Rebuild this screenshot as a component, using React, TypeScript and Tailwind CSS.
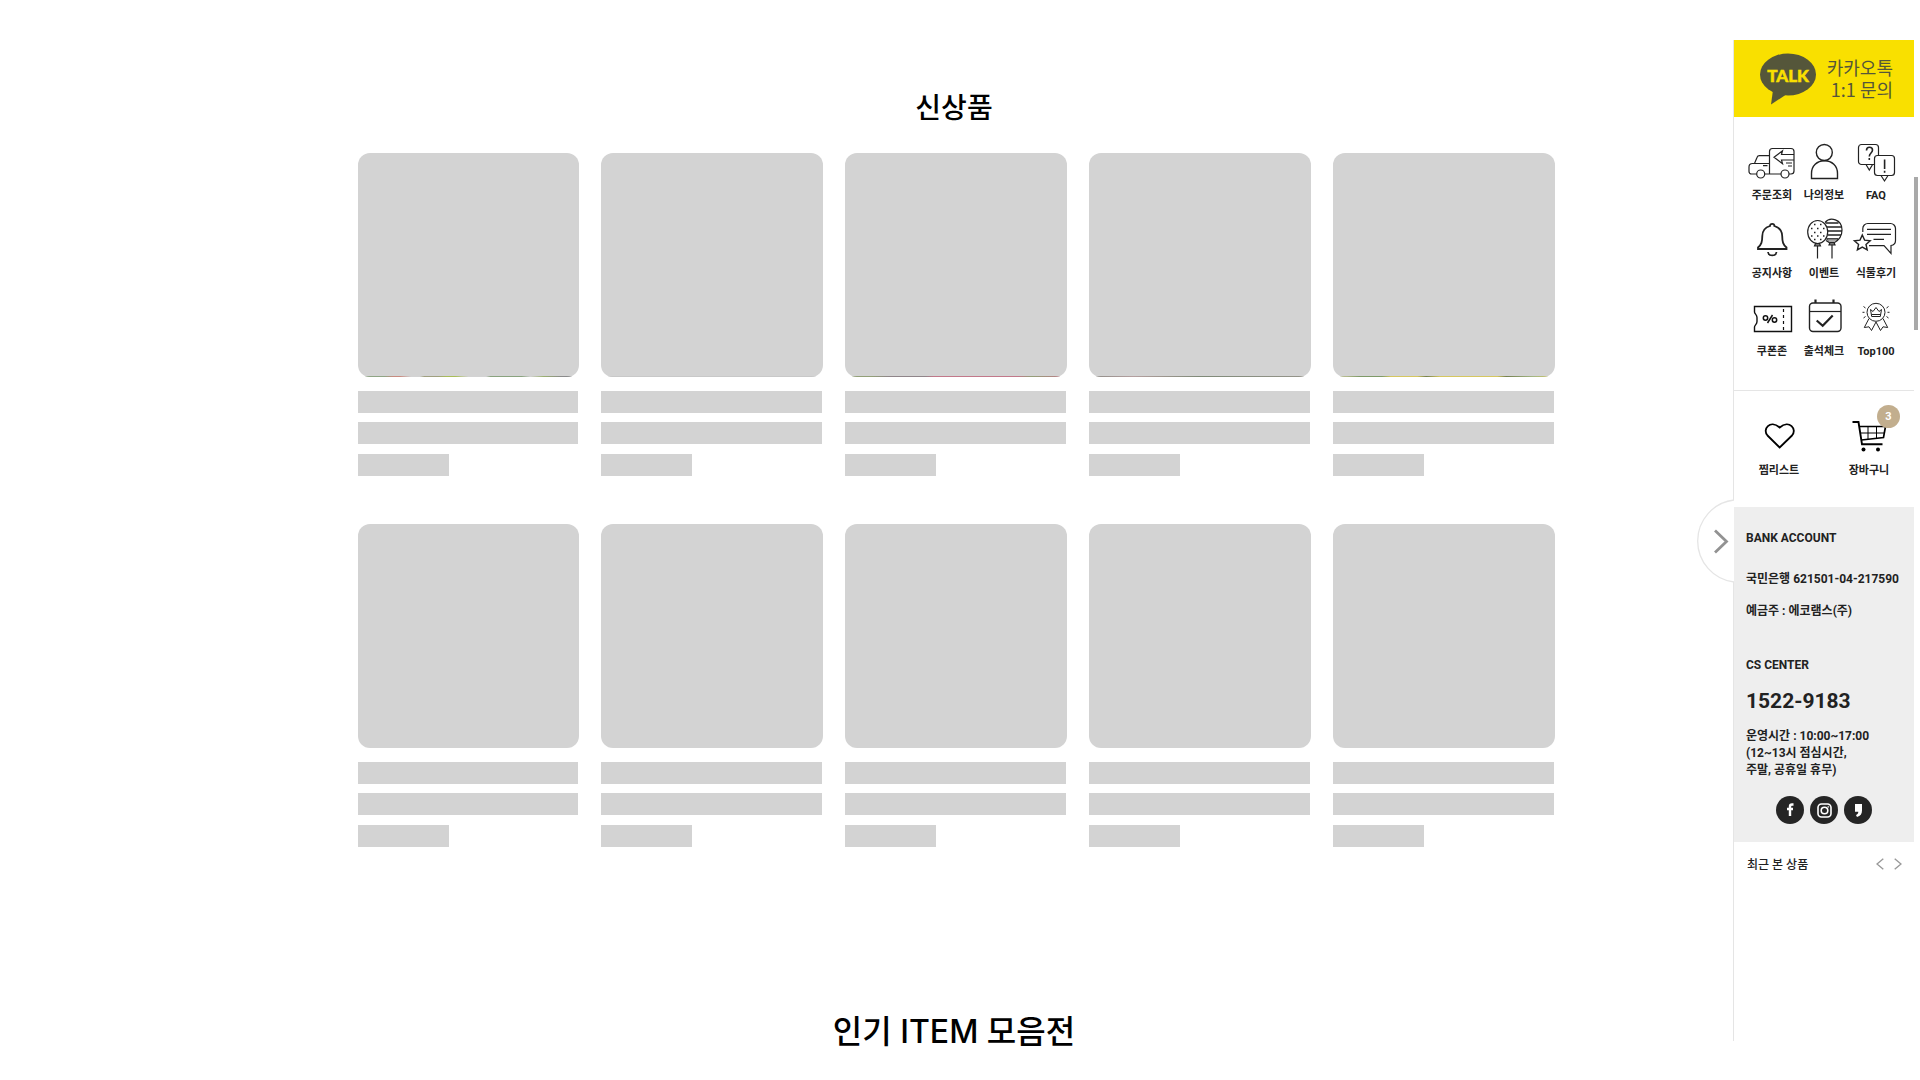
import type { ReactNode } from "react";

const STRIPS = [
  "bg-[linear-gradient(90deg,#8fa585_0_12%,#c98b80_16%_19%,#d3d3d3_24%_28%,#a0a080_30%_36%,#a9bd58_40%_44%,#d3d3d3_50%_58%,#8aa37f_60%_74%,#d3d3d3_78%,#9bb070_84%,#8b8b8b_92%)]",
  "bg-[#c8c8c8]",
  "bg-[linear-gradient(90deg,#93a078_0_12%,#8f8589_20%_36%,#c2788a_40%_78%,#93a078_84%,#c2788a)]",
  "bg-[linear-gradient(90deg,#8c8c86,#b5a0a0_20%,#7f8a78_50%,#97958c)]",
  "bg-[linear-gradient(90deg,#b3b98a_0_6%,#7f9a68_12%_22%,#d6c760_26%_38%,#75804f_42%,#d6c760_48%_74%,#75804f_78%,#a4b684_90%,#d6c760)]",
];

function ProductCard({ strip }: { strip?: string }) {
  return (
    <li>
      <div className="flex h-[224px] flex-col justify-end overflow-hidden rounded-xl bg-[#d3d3d3]">
        {strip && <div className={`h-px ${strip}`} />}
      </div>
      <div className="mt-[14px] mr-px h-[22px] bg-[#d3d3d3]" />
      <div className="mt-[9px] mr-px h-[22px] bg-[#d3d3d3]" />
      <div className="mt-[10px] h-[22px] w-[91px] bg-[#d3d3d3]" />
    </li>
  );
}

function Icon({ children }: { children: ReactNode }) {
  return (
    <svg width="52" height="46" viewBox="0 0 52 46" fill="none" stroke="#222" strokeWidth="1.2" aria-hidden="true">
      {children}
    </svg>
  );
}

const MENU: { label: string; icon: ReactNode }[] = [
  {
    label: "주문조회",
    icon: (
      <>
        <path d="M10.7 36H5.5a2.500 2.500 0 0 1-2.500-2.500V29a3.500 3.500 0 0 1 3.500-3.500h2L11 19.500q.6-1.800 2.500-1.800H23.500M8.500 25.500H23.500M18.700 36H35M23.500 36V13.500a3 3 0 0 1 3-3H45a3 3 0 0 1 3 3V33a3 3 0 0 1-3 3H43" />
        <circle cx="14.700" cy="36" r="4" />
        <circle cx="39" cy="36" r="4" />
        <path d="M48 16.500H35.500l1-3.700L28 19.300l8.500 6.400-1-3.700H48M40 25h6M42 28h4M17 27.700h4.500" />
      </>
    ),
  },
  {
    label: "나의정보",
    icon: (
      <g strokeWidth="1.4">
        <circle cx="26.300" cy="14.500" r="8" />
        <path d="M13.500 40.500V35.500C13.500 28 19 22.800 26.500 22.800S39.500 28 39.500 35.500V40.500Z" />
      </g>
    ),
  },
  {
    label: "FAQ",
    icon: (
      <>
        <path d="M24.500 26.500H11.500a3 3 0 0 1-3-3V9.500a3 3 0 0 1 3-3H25.500a3 3 0 0 1 3 3V17.500M16 26.500l3.300 5.500 3.300-5.500" />
        <rect x="24.500" y="17.500" width="20" height="20" rx="3" />
        <path d="M31 37.500l3.500 5.500 3.500-5.500" />
        <path d="M16.500 12.500c0-4.500 6-4 6-.5 0 3-3.200 3-3.200 6.500M19.300 20v2M34.600 21.500V31M34.600 32.700v2" strokeWidth="1.600" />
      </>
    ),
  },
  {
    label: "공지사항",
    icon: (
      <g strokeWidth="1.800">
        <path d="M24 10a2.200 2.200 0 0 1 4.400 0c4.600 1.300 7.600 5 7.800 10 .1 6 .8 8.500 4.300 11.500V33H12v-1.500c3.500-3 4.200-5.500 4.300-11.500C16.400 15 19.400 11.300 24 10Z" />
        <path d="M22 36c.5 4.500 8 4.500 8.500 0" />
      </g>
    ),
  },
  {
    label: "이벤트",
    icon: (
      <>
        <path d="M27 6.500C32 .5 44 3 44 14c0 6-4 10.500-7.500 12.500h-5.500L28 24.500" />
        <path d="M27.500 7H40.500M29 11H44M30 15H44M29.500 19H43M28.500 23H40" strokeWidth="1.300" />
        <path d="M29 23H40L36.500 26.500H31Z" fill="#aaa" strokeWidth=".6" />
        <ellipse cx="19.700" cy="16" rx="10" ry="11.500" />
        <path d="M17.500 27.500h4l1 2.500h-6ZM32 26.500h4l1 2.500h-6Z" fill="#777" />
        <path d="M19.500 30V42.500M34 29V42.500" />
        <path
          d="M16 8.500h1.500M22 8.500h1.500M13 12.500h1.500M19 12.500h1.500M25 12.500h1.500M16 16.500h1.500M22 16.500h1.500M13 20h1.500M19 20h1.500M25 20h1.500M16 23.500h1.500M22 23.500h1.500"
          strokeWidth="1.500"
        />
      </>
    ),
  },
  {
    label: "식물후기",
    icon: (
      <>
        <path d="M12.800 16V12.500a5 5 0 0 1 5-5H40.500a5 5 0 0 1 5 5V24.500c0 3-1.500 4.500-4.500 5V37.500L34 29.700H19" />
        <path d="M17 13.300H41M17 18.300H41M23.500 23.300H34" />
        <path d="M12.300 19l2.300 5.100 5.600.6-4.200 3.700 1.200 5.500-4.900-2.800-4.900 2.800 1.200-5.500-4.200-3.700 5.600-.6Z" strokeWidth="1.400" />
      </>
    ),
  },
  {
    label: "쿠폰존",
    icon: (
      <g stroke="#111">
        <path d="M8.500 12.500H45.500V37.500H8.500V33c0-2 2.500-2.500 2.500-5.500v-4c0-3-2.500-3.500-2.500-5.500Z" strokeWidth="1.400" />
        <path d="M37.500 15V37" strokeDasharray="3 3" />
        <circle cx="19.500" cy="24" r="2.200" strokeWidth="1.500" />
        <circle cx="28.500" cy="26" r="2.200" strokeWidth="1.500" />
        <path d="M26.500 21L21.500 29" strokeWidth="1.500" />
      </g>
    ),
  },
  {
    label: "출석체크",
    icon: (
      <>
        <rect x="11.500" y="9" width="31.500" height="28.500" rx="3.500" strokeWidth="1.400" />
        <path d="M11.500 17.500H43" />
        <path d="M17.500 5.500V9M35.500 5.500V9" strokeWidth="2.200" />
        <path d="M18.700 26.500l6 5.300L34.700 21.500" strokeWidth="2.200" />
      </>
    ),
  },
  {
    label: "Top100",
    icon: (
      <g strokeWidth="1">
        <circle cx="26" cy="18.300" r="9" />
        <path d="M20.500 15.500l2.500 2 3-4 3 4 2.500-2-1.200 7H21.700ZM21.500 20.500h9" />
        <path d="M19 24.500L14.300 33.500l4.700-.7 2.500 3.700L26 28l4.500 8.500 2.500-3.700 4.700.7L33 24.500" />
        <path d="M15.500 14l-2-1.500M14.500 18.300H12.500M15.500 22.500l-2 1.500M36.500 14l2-1.500M37.500 18.300h2M36.500 22.500l2 1.500" />
      </g>
    ),
  },
];

const linkClass = "flex flex-col items-center text-[11px] leading-4 font-bold";
const titleClass = "w-full pr-[4px] text-center font-medium text-black";

export default function App() {
  return (
    <div className="flex h-screen items-start overflow-hidden bg-white font-['Inter','Noto_Sans_CJK_KR',sans-serif] text-[#222]">
      <main className="flex min-w-0 flex-1 flex-col items-center pl-[179px]">
        <h2 className={`mt-[88px] text-[28px] leading-10 ${titleClass}`}>신상품</h2>
        <ul className="mt-[25px] grid w-full max-w-[1197px] grid-cols-5 gap-x-[22px] gap-y-12">
          {STRIPS.map((strip) => (
            <ProductCard key={strip} strip={strip} />
          ))}
          {STRIPS.map((_, i) => (
            <ProductCard key={i} />
          ))}
        </ul>
        <h2 className={`mt-[161px] text-[32px] leading-[48px] ${titleClass}`}>인기 ITEM 모음전</h2>
      </main>

      <div className="h-full shrink-0 pt-10 pb-[39px] font-['Roboto','Noto_Sans_CJK_KR',sans-serif]">
        <aside className="relative h-full w-[181px] border-l border-[#e5e5e5]">
          <button type="button" aria-label="사이드 메뉴 닫기" className="absolute top-[459px] -left-[37px] h-[84px] w-[37px]">
            <svg width="37" height="84" viewBox="0 0 37 84" fill="none">
              <path d="M37 1A41.300 41.300 0 0 0 37 83" stroke="#e5e5e5" strokeWidth="1.3" fill="#fff" />
              <path d="M18 31.500L29.500 42.500L18 53.500" stroke="#929292" strokeWidth="2.800" />
            </svg>
          </button>

          <a
            href="#talk"
            className="flex h-[77px] items-center justify-between bg-[#f9e000] pr-[21px] pl-[26px] font-['Noto_Sans_CJK_KR',sans-serif] text-[#55563a]"
          >
            <svg width="56" height="52" viewBox="0 0 56 52">
              <ellipse cx="28" cy="21.500" rx="28" ry="21" fill="currentColor" />
              <path d="M13 37L11 51.500L27 41Z" fill="currentColor" />
              <text x="28" y="29" textAnchor="middle" fontSize="17" fontWeight="900" fill="#f9e000" stroke="#f9e000" strokeWidth=".5" fontFamily="Lato, sans-serif">
                TALK
              </text>
            </svg>
            <span className="pb-[2px] text-right text-[18px] leading-[22px]">
              카카오톡
              <br />
              1:1 문의
            </span>
          </a>

          <nav className="grid grid-cols-3 gap-y-3 border-b border-[#e5e5e5] px-3 pt-[21px] pb-[30px]">
            {MENU.map(({ label, icon }) => (
              <a key={label} href="#menu" className={linkClass}>
                <Icon>{icon}</Icon>
                <span className="mt-1 whitespace-nowrap">{label}</span>
              </a>
            ))}
          </nav>

          <div className="grid h-[116px] grid-cols-2 pt-5">
            <a href="#wish" className={linkClass}>
              <Icon>
                <path
                  d="M26.700 36.500L14.500 24.500C9 18.500 17 8 26.700 16.500C36.500 8 44.500 18.500 39 24.500Z"
                  stroke="#000"
                  strokeWidth="1.800"
                />
              </Icon>
              <span className="mt-[6px]">찜리스트</span>
            </a>
            <a href="#cart" className={linkClass}>
              <span className="relative">
                <Icon>
                  <g stroke="#000">
                    <path d="M9.500 11H15.500L19 33.300H39.500" strokeWidth="1.900" />
                    <path d="M16.500 15.500H42.500L40.500 26.500L18.500 29" strokeWidth="1.700" />
                    <path d="M17.500 22H41.500M25 15.500V28M33.500 15.500V27" strokeWidth="1" />
                    <circle cx="20.500" cy="38.500" r="2" fill="#000" stroke="none" />
                    <circle cx="35" cy="38.500" r="2" fill="#000" stroke="none" />
                  </g>
                </Icon>
                <span className="absolute -top-[6px] left-[34px] flex size-[23px] items-center justify-center rounded-full bg-[#c2ae8e] text-[11px] text-white">
                  3
                </span>
              </span>
              <span className="mt-[6px]">장바구니</span>
            </a>
          </div>

          <section className="bg-[#eee] pt-[23px] pb-[18px] pl-3 text-[12px] leading-4 font-bold whitespace-nowrap">
            <h3>BANK ACCOUNT</h3>
            <p className="mt-[25px]">국민은행 621501-04-217590</p>
            <p className="mt-4">예금주 : 에코램스(주)</p>
            <h3 className="mt-[38px]">CS CENTER</h3>
            <p className="mt-4 text-[21px] leading-6">1522-9183</p>
            <p className="mt-[15px] leading-[17px]">
              운영시간 : 10:00~17:00
              <br />
              (12~13시 점심시간,
              <br />
              주말, 공휴일 휴무)
            </p>
            <div className="mt-[17px] flex gap-[6px] pl-[30px]">
              <a href="#facebook" aria-label="Facebook" className="size-7 rounded-full bg-[#252525]">
                <svg width="28" height="28" viewBox="0 0 28 28" fill="none">
                  <path d="M17.500 8.500h-1.500q-2 0-2 2V20M11 13h6" stroke="#fff" strokeWidth="2.400" />
                </svg>
              </a>
              <a href="#instagram" aria-label="Instagram" className="size-7 rounded-full bg-[#252525]">
                <svg width="28" height="28" viewBox="0 0 28 28" fill="none" stroke="#fff" strokeWidth="1.600">
                  <rect x="8" y="8" width="13" height="13" rx="3.500" />
                  <circle cx="14.500" cy="14.500" r="3.300" />
                  <circle cx="18.300" cy="10.800" r=".5" strokeWidth=".8" />
                </svg>
              </a>
              <a href="#story" aria-label="KakaoStory" className="size-7 rounded-full bg-[#252525]">
                <svg width="28" height="28" viewBox="0 0 28 28">
                  <path d="M11 8h7v6.500c0 3.500-1.500 5.500-5 6.500l-1-2c1.500-.6 2.300-1.500 2.300-3.300H11Z" fill="#fff" />
                </svg>
              </a>
            </div>
          </section>

          <div className="flex items-center justify-between pt-[15px] pr-3 pl-[13px]">
            <h3 className="text-[12px] leading-4 font-medium">최근 본 상품</h3>
            <div className="flex gap-[10px] pb-[2px]">
              <button type="button" aria-label="이전">
                <svg width="8" height="12" viewBox="0 0 8 12" fill="none" stroke="#999" strokeWidth="1.400">
                  <path d="M7.300.8L1 6l6.300 5.200" />
                </svg>
              </button>
              <button type="button" aria-label="다음">
                <svg width="8" height="12" viewBox="0 0 8 12" fill="none" stroke="#999" strokeWidth="1.400">
                  <path d="M.7.8L7 6L.7 11.200" />
                </svg>
              </button>
            </div>
          </div>
        </aside>
      </div>

      <div className="w-[6px] shrink-0 pt-[177px]">
        <div className="h-[153px] w-[4px] bg-[#a9a9a9]" />
      </div>
    </div>
  );
}
